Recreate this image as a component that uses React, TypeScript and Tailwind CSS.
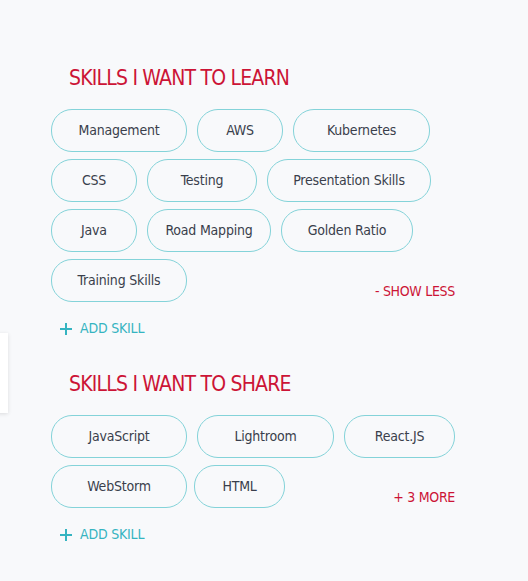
const font = "font-['Liberation_Sans_Narrow','DejaVu_Sans_Condensed',sans-serif]"

interface Skill {
  name: string
  width: string
}

const learnSkills: Skill[] = [
  { name: 'Management', width: 'w-[136px]' },
  { name: 'AWS', width: 'w-[86px]' },
  { name: 'Kubernetes', width: 'w-[137px]' },
  { name: 'CSS', width: 'w-[86px]' },
  { name: 'Testing', width: 'w-[110px]' },
  { name: 'Presentation Skills', width: 'w-[164px]' },
  { name: 'Java', width: 'w-[86px]' },
  { name: 'Road Mapping', width: 'w-[124px]' },
  { name: 'Golden Ratio', width: 'w-[132px]' },
  { name: 'Training Skills', width: 'w-[136px]' },
]

const shareSkills: Skill[] = [
  { name: 'JavaScript', width: 'w-[136px]' },
  { name: 'Lightroom', width: 'w-[137px]' },
  { name: 'React.JS', width: 'w-[111px]' },
  { name: 'WebStorm', width: 'w-[136px]' },
  { name: 'HTML', width: 'w-[91px] -ml-[3px]' },
]

function Chip({ skill }: { skill: Skill }) {
  return (
    <div
      className={`${skill.width} h-[43px] rounded-[21px] border border-[#84d3d9] flex items-center justify-center text-[14px] tracking-[-0.2px] text-[#3a3f4c]`}
    >
      {skill.name}
    </div>
  )
}

function AddSkill() {
  return (
    <button className="flex items-center gap-[7px] pl-[8px] text-[14px] tracking-[-0.2px] text-[#35b4c1]">
      <svg width="14" height="14" viewBox="0 0 14 14" fill="none">
        <path d="M7 1v12M1 7h12" stroke="#35b4c1" strokeWidth="2" />
      </svg>
      <span>ADD SKILL</span>
    </button>
  )
}

function SkillSection({ title, skills, toggle }: { title: string; skills: Skill[]; toggle: string }) {
  return (
    <section>
      <h2 className="pl-[18px] text-[21px] leading-[28px] tracking-[-0.8px] text-[#cc1436]">{title}</h2>

      <div className="mt-[17px] w-[404px] flex flex-wrap items-end gap-x-[10px] gap-y-[7px]">
        {skills.map(s => (
          <Chip key={s.name} skill={s} />
        ))}
        <span className="ml-auto text-[14px] tracking-[-0.3px] text-[#cc1436]">{toggle}</span>
      </div>

      <div className="mt-[16px]">
        <AddSkill />
      </div>
    </section>
  )
}

export default function App() {
  return (
    <div className={`relative min-h-[581px] bg-[#f8f9fb] ${font}`}>
      {/* side panel peeking in from the left */}
      <div className="absolute left-[-40px] top-[333px] w-[48px] h-[80px] bg-white shadow-[0_1px_4px_rgba(0,0,0,0.12)]" />

      <div className="pl-[51px] pt-[64px] flex flex-col gap-[31px]">
        <SkillSection title="SKILLS I WANT TO LEARN" skills={learnSkills} toggle="- SHOW LESS" />
        <SkillSection title="SKILLS I WANT TO SHARE" skills={shareSkills} toggle="+ 3 MORE" />
      </div>
    </div>
  )
}
